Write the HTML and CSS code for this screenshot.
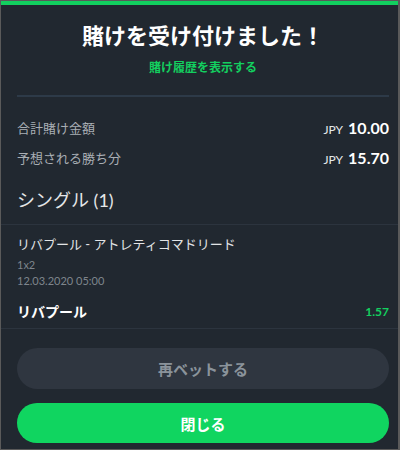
FILE: index.html
```html
<!DOCTYPE html>
<html lang="ja">
<head>
  <meta charset="UTF-8" />
  <meta name="viewport" content="width=device-width, initial-scale=1.0" />
  <title>Bet placed</title>
  <link rel="stylesheet" href="styles.css">
</head>
<body>
  <div class="receipt">
    <div class="accent"></div>

    <!-- Header -->
    <div class="head">
      <h1 class="title">賭けを受け付けました！</h1>
      <a class="history-link" href="#">賭け履歴を表示する</a>
      <div class="rule"></div>

      <div class="totals">
        <div class="total-row">
          <span class="label">合計賭け金額</span>
          <span class="amount"><span class="currency">JPY</span>10.00</span>
        </div>
        <div class="total-row">
          <span class="label">予想される勝ち分</span>
          <span class="amount"><span class="currency">JPY</span>15.70</span>
        </div>
      </div>

      <h2 class="section-title">シングル (1)</h2>
    </div>

    <!-- Bet -->
    <div class="bet">
      <div class="match">リバプール - アトレティコマドリード</div>
      <div class="meta">1x2</div>
      <div class="meta">12.03.2020 05:00</div>
      <div class="selection">
        <span>リバプール</span>
        <span class="odds">1.57</span>
      </div>
    </div>

    <!-- Actions -->
    <div class="actions">
      <button class="btn btn-secondary">再ベットする</button>
      <button class="btn btn-primary">閉じる</button>
    </div>
  </div>
</body>
</html>
```

FILE: styles.css
```css
* {
  box-sizing: border-box;
}

body {
  margin: 0;
  font-family: Lato, "Noto Sans CJK JP", sans-serif;
  background: #212830;
  color: #fff;
}

.receipt {
  width: 400px;
  height: 450px;
  border: 1px solid #5a5a5a;
  border-right-width: 2px;
  background: #212830;
  display: flex;
  flex-direction: column;
}

.accent {
  height: 4px;
  background: #12d05f;
}

.head {
  padding: 16px 9px 0 16px;
  text-align: center;
}

.title {
  margin: 0;
  font-size: 22px;
  line-height: 30px;
  font-weight: 700;
  color: #fff;
}

.history-link {
  display: block;
  margin-top: 8px;
  font-size: 12px;
  line-height: 18px;
  font-weight: 700;
  color: #13cf5f;
  text-decoration: none;
}

.rule {
  height: 2px;
  margin-top: 18px;
  background: #2d3a48;
}

.totals {
  padding-top: 15px;
  text-align: left;
}

.total-row {
  height: 30px;
  display: flex;
  justify-content: space-between;
  align-items: center;
}

.label {
  font-size: 13px;
  color: #a9aeb4;
}

.amount {
  font-size: 16px;
  font-weight: 700;
  color: #fff;
  display: flex;
  align-items: baseline;
}

.currency {
  font-size: 12px;
  font-weight: 400;
  margin-right: 5px;
  color: #e6e8ea;
}

.section-title {
  margin: 14px 0 10px;
  font-size: 18px;
  line-height: 28px;
  font-weight: 400;
  color: #e4e6e8;
  text-align: left;
}

.bet {
  border-top: 1px solid #2c343e;
  border-bottom: 1px solid #2c343e;
  padding: 9px 9px 6px 16px;
}

.match {
  font-size: 13px;
  line-height: 20px;
  color: #e2e4e6;
  margin-bottom: 3px;
}

.meta {
  font-size: 11px;
  line-height: 16px;
  color: #7e858c;
}

.selection {
  margin-top: 11px;
  height: 22px;
  display: flex;
  justify-content: space-between;
  align-items: center;
  font-size: 14px;
  font-weight: 700;
}

.odds {
  font-size: 12px;
  color: #13cf5f;
}

.actions {
  padding: 19px 9px 0 16px;
  display: flex;
  flex-direction: column;
  gap: 14px;
}

.btn {
  border: none;
  border-radius: 21px;
  font-family: inherit;
  font-size: 15px;
  font-weight: 700;
  cursor: pointer;
}

.btn-secondary {
  height: 41px;
  background: #2f3640;
  color: #8a939b;
}

.btn-primary {
  height: 40px;
  background: #10d560;
  color: #fff;
}
```
